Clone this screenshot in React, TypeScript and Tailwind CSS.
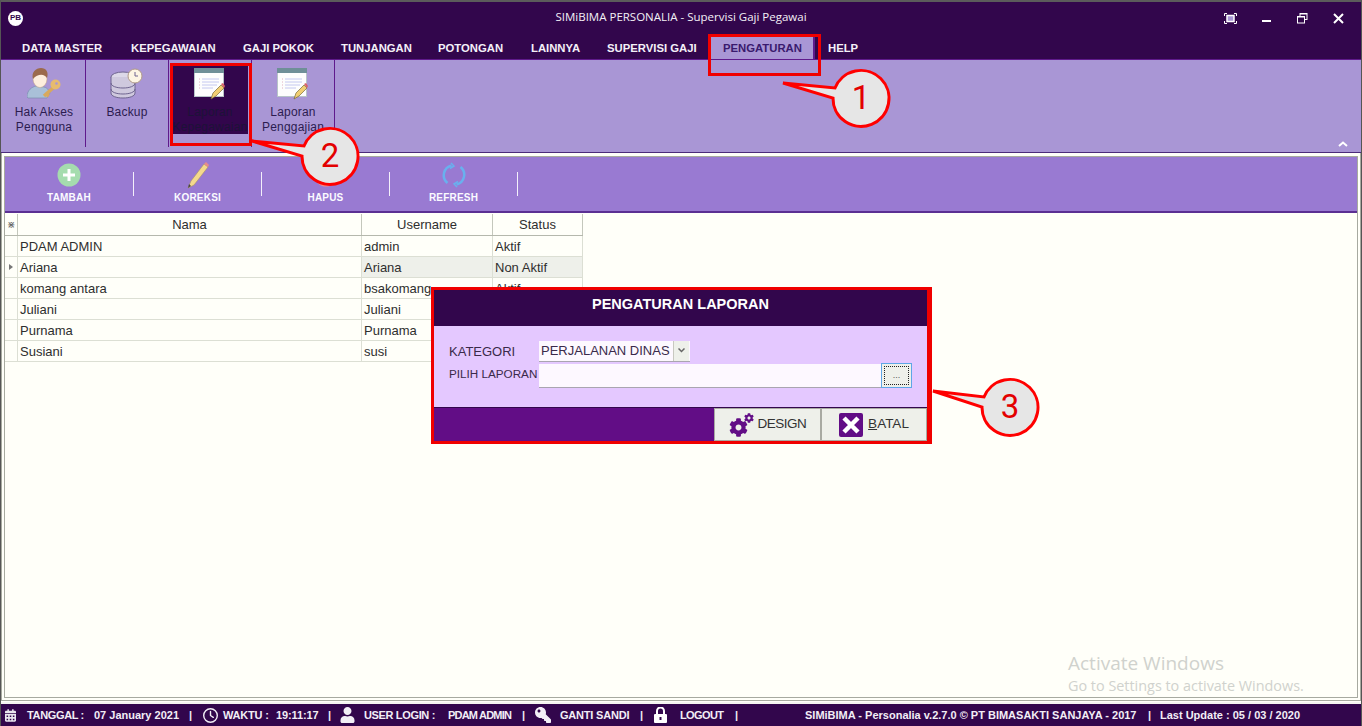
import { FaCalendarAlt, FaCog, FaKey, FaUser } from "react-icons/fa";
import { FaRegClock } from "react-icons/fa6";

const menus = [
  { label: "DATA MASTER", cls: "w-[109px]" },
  { label: "KEPEGAWAIAN", cls: "w-[112px]" },
  { label: "GAJI POKOK", cls: "w-[98px]" },
  { label: "TUNJANGAN", cls: "w-[97px]" },
  { label: "POTONGAN", cls: "w-[93px]" },
  { label: "LAINNYA", cls: "w-[76px]" },
  { label: "SUPERVISI GAJI", cls: "w-[101px]" },
];

// status of the last three rows sits behind the dialog
const rows = [
  { nama: "PDAM ADMIN", user: "admin", status: "Aktif" },
  { nama: "Ariana", user: "Ariana", status: "Non Aktif", current: true },
  { nama: "komang antara", user: "bsakomang", status: "Aktif" },
  { nama: "Juliani", user: "Juliani", status: "" },
  { nama: "Purnama", user: "Purnama", status: "" },
  { nama: "Susiani", user: "susi", status: "" },
];

const ReportIcon = () => (
  <svg width="32" height="32" viewBox="0 0 32 32">
    <rect x="0.500" y="0.500" width="29" height="28" fill="#fdfdfd" stroke="#b7c4c8" />
    <rect x="0" y="0" width="30" height="5" fill="#6f8f98" />
    <path d="M8 11h17M8 14h17M8 17h15M8 20h11" stroke="#c4c8f0" strokeWidth="1" />
    <path d="M5 11h1M5 14h1M5 17h1M5 20h1" stroke="#e0b0c0" strokeWidth="1" />
    <path d="M17 31l2-6 8-8 3 3-8 8z" fill="#f2cf72" stroke="#7a6a3a" strokeWidth="0.700" />
    <path d="M27 16l2-1 2 3-1 2z" fill="#d9606a" />
  </svg>
);

const RibbonButton = ({ lines, icon, active }: { lines: string[]; icon: React.ReactNode; active?: boolean }) => (
  <div className="w-[83px] h-[87px] border-r border-[#5f1a8c] flex justify-center shrink-0">
    <div className={`w-[75px] h-[70px] mt-[4px] flex flex-col items-center ${active ? "bg-[#32064c] text-[#1d1238]" : "text-[#2c1c50]"}`}>
      <div className="h-[32px] mt-[4px] flex justify-center">{icon}</div>
      <div className="mt-[5px] text-[12px] leading-[15px] text-center whitespace-nowrap tracking-[0.2px]">
        {lines.map((l) => (
          <div key={l}>{l}</div>
        ))}
      </div>
    </div>
  </div>
);

const ToolButton = ({ label, icon, first }: { label: string; icon: React.ReactNode; first?: boolean }) => (
  <>
    <div className={`${first ? "w-[128px]" : "w-[127px]"} flex flex-col items-center h-full shrink-0`}>
      <div className="h-[28px] mt-[4px] flex items-center justify-center">{icon}</div>
      <div className="mt-[2px] text-[10px] leading-[13px] font-bold text-[#fbfbff] tracking-[0.2px]">{label}</div>
    </div>
    <div className="w-[1px] h-[24px] bg-[#f4f0fb] shrink-0" />
  </>
);

const Callout = ({ cx, cy, tipX, tipY, num }: { cx: number; cy: number; tipX: number; tipY: number; num: string }) => {
  const path = `M${tipX} ${tipY} L${cx - 26} ${cy - 9} A28 28 0 1 1 ${cx - 28} ${cy + 1} Z`;
  return (
    <g>
      <path d={path} fill="#e6e6e6" stroke="#ff0000" strokeWidth="3" strokeLinejoin="miter" />
      <text x={cx} y={cy + 12} textAnchor="middle" fontSize="33" fill="#e30000" className="font-['Roboto',sans-serif]">
        {num}
      </text>
    </g>
  );
};

const Sep = ({ ml }: { ml: string }) => <span className={`${ml} text-[11px] w-[3px]`}>|</span>;

export default function App() {
  return (
    <div className="relative w-[1362px] h-[726px] overflow-hidden flex flex-col bg-[#fffff9] font-['Liberation_Sans',sans-serif] text-[#2a2a2a]">
      <div className="h-[2px] bg-[#5b5b5b] shrink-0" />
      {/* title bar */}
      <div className="h-[30px] bg-[#32064c] flex items-center relative shrink-0 pt-[2px]">
        <div className="ml-[8px] w-[15px] h-[15px] rounded-full bg-white flex items-center justify-center text-[#32064c] text-[8px] font-bold leading-none">
          PB
        </div>
        <div className="absolute left-0 right-0 text-center text-[11.500px] text-[#f2f0f6] font-['Open_Sans',sans-serif] top-[7px] leading-[16px]">
          SIMiBIMA PERSONALIA - Supervisi Gaji Pegawai
        </div>
        <div className="ml-auto flex items-center text-white">
          <svg width="13" height="11" viewBox="0 0 13 11" fill="none" stroke="white" className="mr-[25px]">
            <path d="M.5 3V.5H3M10 .5h2.500V3M.5 8v2.500H3M10 10.500h2.500V8" />
            <rect x="3" y="2.500" width="7" height="6" fill="#a996d5" strokeWidth="1.500" />
          </svg>
          <svg width="10" height="12" viewBox="0 0 10 12" className="mr-[25px]">
            <rect y="8" width="9" height="2" fill="white" />
          </svg>
          <svg width="11" height="11" viewBox="0 0 11 11" fill="none" stroke="white" className="mr-[25px]">
            <rect x="3" y=".5" width="7" height="6" />
            <rect x=".5" y="3.500" width="7" height="6.500" fill="#32064c" />
            <path d="M1 4h6M3 1h7" />
          </svg>
          <svg width="11" height="11" viewBox="0 0 11 11" stroke="white" strokeWidth="2" className="mr-[18px]">
            <path d="M1 1l9 9M10 1l-9 9" />
          </svg>
        </div>
      </div>
      {/* menu */}
      <div className="h-[28px] bg-[#32064c] border-b border-[#5f1a8c] flex items-end pl-[22px] shrink-0">
        {menus.map((m) => (
          <div key={m.label} className={`${m.cls} h-[27px] pt-[6px] flex items-center text-[11.300px] font-bold text-[#f4f0f8] whitespace-nowrap`}>
            {m.label}
          </div>
        ))}
        <div className="w-[107px] pl-[15px] h-[23px] pt-[1px] flex items-center text-[11.300px] font-bold text-[#3a1a6e] bg-[#a996d5] border-r-2 border-[#5f1a8c]">
          PENGATURAN
        </div>
        <div className="ml-[13px] h-[27px] pt-[6px] flex items-center text-[11.300px] font-bold text-[#f4f0f8]">HELP</div>
      </div>
      {/* ribbon */}
      <div className="h-[93px] bg-[#a996d5] border-b border-[#4b2a7a] flex pl-[3px] relative shrink-0">
        <RibbonButton
          lines={["Hak Akses", "Pengguna"]}
          icon={
            <svg width="34" height="32" viewBox="0 0 34 32">
              <path d="M0 29c0-7 5-10 9-11l8 1c4 1 5 4 6 6l-3 5H1z" fill="#a9c0d8" stroke="#7b8db0" strokeWidth=".7" />
              <ellipse cx="13" cy="11" rx="7" ry="8.500" fill="#fdeedd" stroke="#c0a080" strokeWidth=".5" />
              <path d="M6 11C4 4 9 0 14 0s8 4 6 10c-2-4-9-5-14 1z" fill="#9b6a4c" />
              <path d="M17 28l10-9" stroke="#d9a95c" strokeWidth="3.500" />
              <path d="M20 29l2-3" stroke="#d9a95c" strokeWidth="2" />
              <circle cx="28.500" cy="16.500" r="5" fill="#e6bb6e" />
              <circle cx="29.500" cy="15.500" r="1.300" fill="#a996d5" />
            </svg>
          }
        />
        <RibbonButton
          lines={["Backup"]}
          icon={
            <svg width="34" height="32" viewBox="0 0 34 32">
              <ellipse cx="13" cy="9" rx="12" ry="5" fill="#dcd8e8" stroke="#6f6590" />
              <path d="M1 9v16c0 3 5 5 12 5s12-2 12-5V9" fill="#cfc9de" stroke="#6f6590" />
              <path d="M1 15c0 3 5 5 12 5s12-2 12-5M1 21c0 3 5 5 12 5s12-2 12-5" fill="none" stroke="#6f6590" />
              <circle cx="25" cy="8" r="7" fill="#fdf5e4" stroke="#b09a8a" />
              <path d="M25 4v4h3" fill="none" stroke="#6f6590" />
            </svg>
          }
        />
        <RibbonButton active lines={["Laporan", "Kepegawaian"]} icon={<ReportIcon />} />
        <RibbonButton lines={["Laporan", "Penggajian"]} icon={<ReportIcon />} />
        <svg width="10" height="6" viewBox="0 0 10 6" className="absolute right-[14px] bottom-[5px]" fill="none" stroke="white" strokeWidth="2">
          <path d="M1 5l4-3.500L9 5" />
        </svg>
      </div>
      {/* body, framed by two thin lines */}
      <div className="flex-1 min-h-0 ml-[1px] mr-[1px] mb-[1px] border border-[#a7aaa0] border-t-0 px-[2px] pb-[2px] pt-[3px] flex">
        <div className="flex-1 border border-[#a7aaa0] flex flex-col">
          <div className="h-[56px] bg-[#997ad2] border-b-2 border-[#5b2f93] flex items-center shrink-0">
            <ToolButton
              first
              label="TAMBAH"
              icon={
                <svg width="24" height="24" viewBox="0 0 24 24">
                  <circle cx="12" cy="12" r="11.500" fill="#a5dcae" />
                  <path d="M12 6v12M6 12h12" stroke="white" strokeWidth="3" />
                </svg>
              }
            />
            <ToolButton
              label="KOREKSI"
              icon={
                <svg width="24" height="28" viewBox="0 0 24 28">
                  <path d="M2 27l3-7L18 3l4 3L8 24z" fill="#f4d98c" stroke="#a38f58" strokeWidth=".5" />
                  <path d="M18 3l2-2 3 3-1 2z" fill="#e88b8b" />
                  <path d="M2 27l1-4 2 2z" fill="#444" />
                </svg>
              }
            />
            <ToolButton
              label="HAPUS"
              icon={
                <svg width="24" height="24" viewBox="0 0 24 24">
                  <circle cx="12" cy="12" r="11.500" fill="#f28b8b" />
                </svg>
              }
            />
            <ToolButton
              label="REFRESH"
              icon={
                <svg width="24" height="26" viewBox="0 0 24 26" fill="none" stroke="#69b0ee" strokeWidth="2.500">
                  <path d="M5.500 21A10 10 0 0 1 9.500 3.500M18.500 5a10 10 0 0 1-4 17.500" />
                  <path d="M9 1l3 3-4 2.500M15 25l-3-3 4-2.500" strokeWidth="1.500" />
                </svg>
              }
            />
          </div>
          <div className="w-[578px] text-[13px] text-[#2e2e2e] mt-[1px]">
            <div className="flex h-[22px] border-b border-[#b5b8ad] text-center leading-[22px]">
              <div className="w-[13px] border-r border-[#c4c7bc] text-[10px] text-[#666] shrink-0">⋇</div>
              <div className="w-[344px] border-r border-[#c4c7bc] shrink-0">Nama</div>
              <div className="w-[131px] border-r border-[#c4c7bc] shrink-0">Username</div>
              <div className="w-[90px] border-r border-[#c4c7bc] shrink-0">Status</div>
            </div>
            {rows.map((r) => (
              <div key={r.nama} className="flex h-[21px] border-b border-[#dcdfd4] leading-[21px]">
                <div className="w-[13px] border-r border-[#dcdfd4] shrink-0 flex items-center justify-center">
                  {r.current && <div className="border-y-[3px] border-y-transparent border-l-[4px] border-l-[#777]" />}
                </div>
                <div className="w-[344px] border-r border-[#dcdfd4] pl-[2px] shrink-0">{r.nama}</div>
                <div className={`w-[131px] border-r border-[#dcdfd4] pl-[2px] shrink-0 ${r.current ? "bg-[#eef0ea]" : ""}`}>{r.user}</div>
                <div className={`w-[90px] border-r border-[#dcdfd4] pl-[2px] shrink-0 ${r.current ? "bg-[#eef0ea]" : ""}`}>{r.status}</div>
              </div>
            ))}
          </div>
        </div>
      </div>
      {/* status bar */}
      <div className="h-[24px] bg-[#32064c] border-t-2 border-[#f4f4f0] flex items-center text-[11px] font-bold text-[#f2eef6] whitespace-nowrap shrink-0">
        <FaCalendarAlt className="ml-[5px] w-[11px] h-[13px] text-[#e9e6ee]" />
        <span className="ml-[11px] w-[57px] tracking-[-0.350px]">TANGGAL :</span>
        <span className="ml-[10px] w-[85px]">07 January 2021</span>
        <Sep ml="ml-[10px]" />
        <FaRegClock className="ml-[11px] w-[15px] h-[15px]" />
        <span className="ml-[5px] w-[45px] tracking-[-0.200px]">WAKTU :</span>
        <span className="ml-[8px] w-[42px] tracking-[-0.100px]">19:11:17</span>
        <Sep ml="ml-[10px]" />
        <FaUser className="ml-[9px] w-[15px] h-[16px]" />
        <span className="ml-[9px] w-[70px] tracking-[-0.350px]">USER LOGIN :</span>
        <span className="ml-[14px] w-[63px] tracking-[-0.800px]">PDAM ADMIN</span>
        <Sep ml="ml-[11px]" />
        <FaKey className="ml-[10px] w-[16px] h-[16px] scale-x-[-1]" />
        <span className="ml-[9px] w-[69px] tracking-[-0.200px]">GANTI SANDI</span>
        <Sep ml="ml-[11px]" />
        <svg width="13" height="16" viewBox="0 0 13 16" className="ml-[11px]">
          <path d="M3 8V4a3.500 3.500 0 0 1 7 0v4" fill="none" stroke="white" strokeWidth="2" />
          <rect y="7" width="13" height="9" rx="1" fill="white" />
          <rect x="5.500" y="10" width="2" height="3" fill="#32064c" />
        </svg>
        <span className="ml-[13px] w-[44px] tracking-[-0.600px]">LOGOUT</span>
        <Sep ml="ml-[11px]" />
        <span className="ml-[67px] w-[332px]">SIMiBIMA - Personalia v.2.7.0 © PT BIMASAKTI SANJAYA - 2017</span>
        <Sep ml="ml-[11px]" />
        <span className="ml-[9px]">Last Update : 05 / 03 / 2020</span>
      </div>

      {/* dialog */}
      <div className="absolute left-[431px] top-[287px] w-[501px] h-[157px] border-[3px] border-r-[5px] border-[#f00000] flex flex-col bg-[#e4c8ff]">
        <div className="h-[36px] bg-[#32064c] text-center text-[14.500px] font-bold text-white leading-[29px] shrink-0">PENGATURAN LAPORAN</div>
        <div className="flex-1 pl-[15px] pt-[15px] relative text-[#3a2a4a]">
          <div className="flex items-center h-[20px]">
            <span className="w-[90px] pt-[2px] text-[13px]">KATEGORI</span>
            <div className="w-[151px] h-[21px] bg-[#fdf8ff] border-b border-[#a9a5b0] flex items-center">
              <span className="pl-[2px] w-[134px] text-[13px] whitespace-nowrap">PERJALANAN DINAS</span>
              <div className="w-[16px] h-full bg-[#eef0ea] border-l border-[#c8c8c0] flex items-center justify-center">
                <svg width="7" height="5" viewBox="0 0 7 5" fill="none" stroke="#666" strokeWidth="1.500">
                  <path d="M.5.5l3 3 3-3" />
                </svg>
              </div>
            </div>
          </div>
          <div className="flex items-center mt-[2px] h-[25px]">
            <span className="w-[90px] whitespace-nowrap text-[11.700px] pb-[3px]">PILIH LAPORAN</span>
            <div className="w-[342px] h-[24px] bg-[#fdf8ff] border-b border-[#a9a5b0]" />
            <div className="w-[31px] h-[25px] bg-[#eef0ea] border border-[#5ea6e6] p-[2px]">
              <div className="w-full h-full border border-dotted border-[#222] flex items-center justify-center text-[9px] leading-none text-[#555]">...</div>
            </div>
          </div>
        </div>
        <div className="h-[34px] bg-[#620d86] border-t border-[#32064c] flex justify-end shrink-0">
          <div className="w-[107px] bg-[#eef0ea] border border-[#a8aaa2] flex items-center justify-center gap-[4px] text-[#333]">
            <span className="relative w-[25px] h-[24px] text-[#620d86]">
              <FaCog className="absolute left-0 bottom-0 w-[19px] h-[19px]" />
              <FaCog className="absolute right-0 top-0 w-[10px] h-[10px]" />
            </span>
            <span className="text-[13.500px] tracking-[-0.500px]">DESIGN</span>
          </div>
          <div className="w-[106px] bg-[#eef0ea] border border-[#a8aaa2] flex items-center justify-center gap-[5px] text-[13.500px] text-[#333]">
            <svg width="24" height="24" viewBox="0 0 24 24">
              <rect width="24" height="24" rx="2" fill="#620d86" />
              <path d="M5 5l14 14M19 5L5 19" stroke="white" strokeWidth="4.500" />
            </svg>
            <span>
              <span className="underline">B</span>ATAL
            </span>
          </div>
        </div>
      </div>

      {/* watermark */}
      <div className="absolute left-[1068px] top-[651px] font-['Open_Sans',sans-serif] text-[#d0d2cd]">
        <div className="text-[19px] leading-[24px]">Activate Windows</div>
        <div className="text-[14.400px] leading-[20px] mt-[1px] whitespace-nowrap">Go to Settings to activate Windows.</div>
      </div>

      {/* window edge */}
      <div className="absolute inset-0 border-x border-[#555] pointer-events-none" />

      {/* numbered callouts and red highlight frames */}
      <div className="absolute left-[708px] top-[34px] w-[113px] h-[42px] border-[3px] border-[#f00000]" />
      <div className="absolute left-[170px] top-[63px] w-[82px] h-[83px] border-[3px] border-[#f00000]" />
      <svg width="1362" height="726" className="absolute left-0 top-0 pointer-events-none">
        <Callout cx={861} cy={97} tipX={783} tipY={83} num="1" />
        <Callout cx={330} cy={155} tipX={252} tipY={141} num="2" />
        <Callout cx={1010} cy={406} tipX={933} tipY={391} num="3" />
      </svg>
    </div>
  );
}
